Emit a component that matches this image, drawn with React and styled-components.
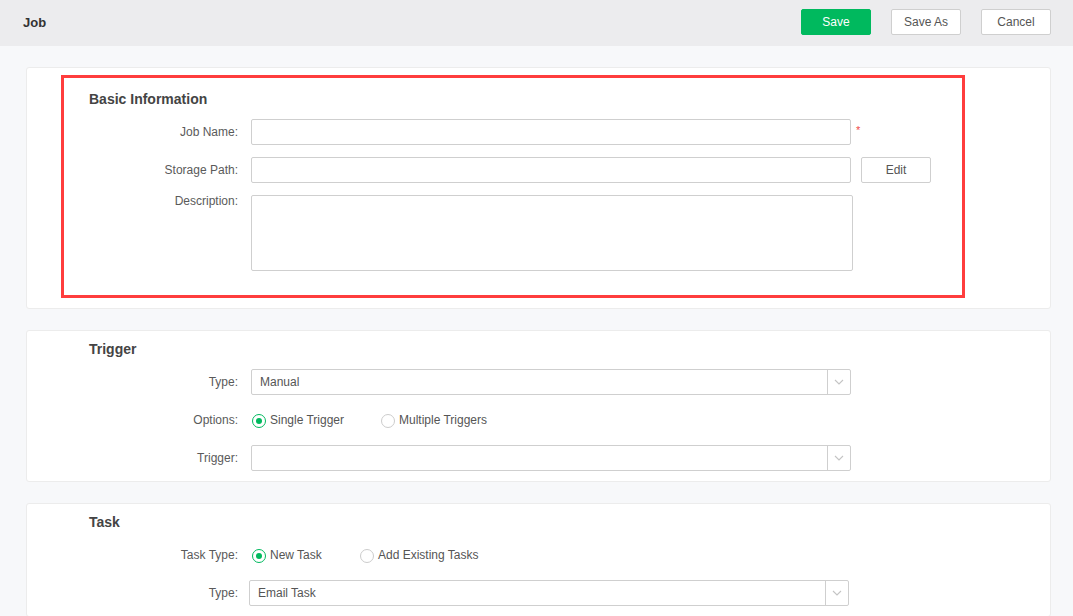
import React from "react";
import styled, { createGlobalStyle } from "styled-components";

const GlobalStyle = createGlobalStyle`
  body {
    margin: 0;
    background: #f7f8fa;
    font-family: "Liberation Sans", Arial, sans-serif;
    font-size: 12px;
    color: #555;
  }
`;

const ChevronDown = () => (
  <svg width="10" height="6" viewBox="0 0 10 6" fill="none">
    <path d="M1 1l4 4 4-4" stroke="#c4c4c4" strokeWidth="1.1" />
  </svg>
);

const Field = ({ label, top, children }) => (
  <Row>
    <Label top={top}>{label}</Label>
    {children}
  </Row>
);

const Select = ({ value, shift }) => (
  <SelectBox shift={shift}>
    <SelectValue>{value}</SelectValue>
    <SelectArrow>
      <ChevronDown />
    </SelectArrow>
  </SelectBox>
);

const Radio = ({ checked, children, width }) => (
  <RadioItem width={width}>
    <RadioCircle checked={checked} />
    {children}
  </RadioItem>
);

const App = () => {
  return (
    <>
      <GlobalStyle />
      <Header>
        <PageTitle>Job</PageTitle>
        <Actions>
          <Button primary>Save</Button>
          <Button>Save As</Button>
          <Button>Cancel</Button>
        </Actions>
      </Header>
      <Body>
        <Card highlighted>
          <Highlight>
            <SectionTitle>Basic Information</SectionTitle>
            <Rows>
              <Field label="Job Name:">
                <Input />
                <Required>*</Required>
              </Field>
              <Field label="Storage Path:">
                <Input />
                <SideButton>Edit</SideButton>
              </Field>
              <Field label="Description:" top>
                <TextArea />
              </Field>
            </Rows>
          </Highlight>
        </Card>

        <Card>
          <SectionTitle>Trigger</SectionTitle>
          <Rows>
            <Field label="Type:">
              <Select value="Manual" />
            </Field>
            <Field label="Options:">
              <Radio checked width={129}>Single Trigger</Radio>
              <Radio>Multiple Triggers</Radio>
            </Field>
            <Field label="Trigger:">
              <Select value="" />
            </Field>
          </Rows>
        </Card>

        <Card>
          <SectionTitle>Task</SectionTitle>
          <Rows>
            <Field label="Task Type:">
              <Radio checked width={108}>New Task</Radio>
              <Radio>Add Existing Tasks</Radio>
            </Field>
            <Field label="Type:">
              <Select value="Email Task" shift />
            </Field>
          </Rows>
        </Card>
      </Body>
    </>
  );
};

const Header = styled.div`
  display: flex;
  justify-content: space-between;
  align-items: center;
  height: 46px;
  padding: 0 22px 0 23px;
  background: #ececee;
`;

const PageTitle = styled.div`
  font-size: 13px;
  font-weight: bold;
  color: #333;
  margin-top: -2px;
`;

const Actions = styled.div`
  display: flex;
  gap: 20px;
  margin-top: -3px;
`;

const Button = styled.button`
  width: 70px;
  height: 26px;
  padding: 0;
  border-radius: 2px;
  font-family: inherit;
  font-size: 12px;
  border: 1px solid ${(p) => (p.primary ? "#00b95e" : "#cfcfcf")};
  background: ${(p) => (p.primary ? "#00b95e" : "#fff")};
  color: ${(p) => (p.primary ? "#fff" : "#555")};
`;

const Body = styled.div`
  display: flex;
  flex-direction: column;
  gap: 21px;
  padding: 21px 22px 0 26px;
`;

const Card = styled.div`
  background: #fff;
  border: 1px solid #ececec;
  border-radius: 3px;
  padding: ${(p) => (p.highlighted ? "7px 0 10px 34px" : "9px 0 10px 62px")};
`;

const Highlight = styled.div`
  width: 873px;
  border: 3px solid #ff3d3d;
  padding: 12px 0 24px 25px;
`;

const SectionTitle = styled.div`
  font-size: 14px;
  font-weight: bold;
  color: #444;
  line-height: 18px;
  margin-bottom: 11px;
`;

const Rows = styled.div`
  display: flex;
  flex-direction: column;
  gap: 12px;
`;

const Row = styled.div`
  display: flex;
  align-items: flex-start;
  min-height: 26px;
`;

const Label = styled.div`
  width: 149px;
  margin-right: 13px;
  text-align: right;
  color: #5a5a5a;
  line-height: ${(p) => (p.top ? "13px" : "26px")};
  flex-shrink: 0;
`;

const Input = styled.div`
  width: 600px;
  height: 26px;
  box-sizing: border-box;
  border: 1px solid #cfcfcf;
  border-radius: 2px;
`;

const TextArea = styled.div`
  width: 602px;
  height: 76px;
  box-sizing: border-box;
  border: 1px solid #cfcfcf;
  border-radius: 2px;
`;

const Required = styled.span`
  color: #f04848;
  font-size: 11px;
  margin-left: 5px;
  line-height: 22px;
`;

const SideButton = styled.button`
  width: 70px;
  height: 26px;
  margin-left: 10px;
  padding: 0;
  border: 1px solid #cfcfcf;
  border-radius: 2px;
  background: #fff;
  font-family: inherit;
  font-size: 12px;
  color: #555;
`;

const SelectBox = styled.div`
  display: flex;
  width: 600px;
  height: 26px;
  box-sizing: border-box;
  border: 1px solid #cfcfcf;
  border-radius: 2px;
  margin-left: ${(p) => (p.shift ? "-2px" : "0")};
`;

const SelectValue = styled.div`
  flex: 1;
  padding-left: 8px;
  line-height: 24px;
  color: #555;
`;

const SelectArrow = styled.div`
  width: 22px;
  border-left: 1px solid #cfcfcf;
  display: flex;
  align-items: center;
  justify-content: center;
`;

const RadioItem = styled.div`
  display: flex;
  align-items: center;
  gap: 4px;
  height: 26px;
  width: ${(p) => (p.width ? `${p.width}px` : "auto")};
  color: #555;
`;

const RadioCircle = styled.span`
  position: relative;
  width: 14px;
  height: 14px;
  box-sizing: border-box;
  margin-left: 1px;
  margin-top: 2px;
  border-radius: 50%;
  border: 1px solid ${(p) => (p.checked ? "#00b95e" : "#ccc")};
  background: #fff;

  &::after {
    content: "";
    display: ${(p) => (p.checked ? "block" : "none")};
    position: absolute;
    left: 3px;
    top: 3px;
    width: 6px;
    height: 6px;
    border-radius: 50%;
    background: #00b95e;
  }
`;

export default App;
